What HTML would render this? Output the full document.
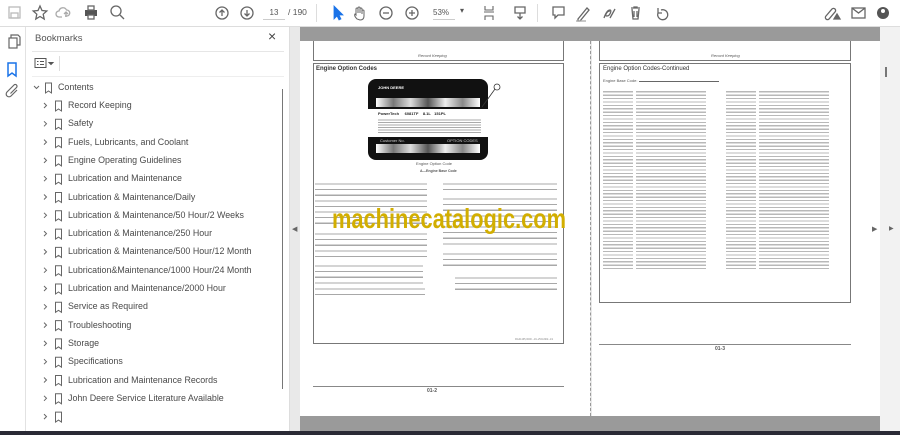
<!DOCTYPE html>
<html><head><meta charset="utf-8"><style>
*{margin:0;padding:0;box-sizing:border-box}
body{width:900px;height:435px;overflow:hidden;background:#fff;font-family:"Liberation Sans",sans-serif;position:relative}
.tb{position:absolute;left:0;top:0;width:900px;height:27px;background:#fff;border-bottom:1px solid #ddd}
.rail{position:absolute;left:0;top:27px;width:26px;height:404px;background:#fff;border-right:1px solid #e2e2e2}
.panel{position:absolute;left:26px;top:27px;width:264px;height:404px;background:#fff;border-right:1px solid #ddd}
.bm{position:absolute;left:68px;font-size:8.9px;color:#4a4a4a;white-space:nowrap}
.doc{position:absolute;left:290px;top:27px;width:590px;height:404px;background:#e9e9e9}
.page{position:absolute;background:#fff}
.t{position:absolute;font-size:4px;color:#555;white-space:nowrap;line-height:5.6px}
.ln{position:absolute;background:repeating-linear-gradient(#fff 0,#fff 2.5px,#a8a8a8 2.5px,#a8a8a8 3.6px,#fff 3.6px,#fff 5.6px)}
.ln2{position:absolute;background:repeating-linear-gradient(#fff 0,#fff 2.2px,#b8b8b8 2.2px,#b8b8b8 3.4px)}
.bottom{position:absolute;left:0;top:431px;width:900px;height:4px;background:#2a2a35}
.sb{position:absolute;left:880px;top:27px;width:20px;height:404px;background:#f2f2f2}
</style></head><body>
<div class="tb">
<svg width="900" height="27" style="position:absolute;left:0;top:0" fill="none" stroke="#666" stroke-width="1.3">
<rect x="9" y="7" width="11" height="11" stroke="#bbb"/><rect x="11" y="13" width="7" height="5" stroke="#bbb"/>
<path d="M40 6l2 4.5 4.8.5-3.6 3.2 1 4.8-4.2-2.5-4.2 2.5 1-4.8-3.6-3.2 4.8-.5z"/>
<path d="M62 17h-3a3 3 0 010-6 4 4 0 017.5-1 3 3 0 01.5 6h-2M66 17v-5m-2 2l2-2 2 2" stroke="#aaa"/>
<rect x="85" y="10" width="12" height="6" fill="#555" stroke="none"/><rect x="88" y="6" width="6" height="4"/><rect x="88" y="15" width="6" height="4" fill="#fff"/>
<circle cx="116" cy="11" r="5"/><path d="M120 15l4 4"/>
<circle cx="222" cy="13" r="6"/><path d="M222 16v-6m-2.5 2.5l2.5-2.5 2.5 2.5"/>
<circle cx="247" cy="13" r="6"/><path d="M247 10v6m-2.5-2.5l2.5 2.5 2.5-2.5"/>
<path d="M334 6v13l3-3 2 4 2-1-2-4h4z" fill="#1a73e8" stroke="#1a73e8" stroke-width=".8"/>
<path d="M357 19c-2-2-3-4-2-5l1 1v-6a1 1 0 012 0v4-5a1 1 0 012 0v5-4a1 1 0 012 0v5-3a1 1 0 012 0v5c0 3-2 4-4 4z" stroke-width="1"/>
<circle cx="386" cy="13" r="6"/><path d="M383 13h6"/>
<circle cx="412" cy="13" r="6"/><path d="M409 13h6M412 10v6"/>
<path d="M485 6v4h8V6M484 12h10M485 20v-4h8v4" stroke-width="1.1"/>
<path d="M515 7h10v6h-10zM520 13v6m-2.5-2.5l2.5 2.5 2.5-2.5"/>
<path d="M553 7h11v8h-6l-3 3v-3h-2z"/>
<path d="M578 19l9-11 2 2-9 11h-2z"/><path d="M576 21h10" stroke="#aaa"/>
<path d="M604 18c2-6 4-8 6-8s0 6-3 6 0-5 3-5M610 18l5-9" />
<path d="M631 8h9M634 8v-1h3v1M632 9l1 10h5l1-10M634 11v6M637 11v6"/>
<path d="M661 10a5 5 0 11-3 3M658 8v5h4" />
<path d="M826 16l6-7a2 2 0 013 3l-6 7a2 2 0 01-3-3" /><path d="M834 19l3-5 3 5z" fill="#666"/>
<rect x="852" y="8" width="13" height="10"/><path d="M852 8l6.5 5 6.5-5"/>
<circle cx="883" cy="13" r="6" fill="#555" stroke="none"/><circle cx="883" cy="11" r="2" fill="#fff" stroke="none"/>
</svg>
<div style="position:absolute;left:263px;top:6px;width:22px;height:14px;border-bottom:1px solid #ccc;font-size:8px;color:#555;text-align:center;line-height:14px">13</div>
<div style="position:absolute;left:288px;top:7px;font-size:8.5px;color:#555">/ 190</div>
<div style="position:absolute;left:316px;top:4px;width:1px;height:18px;background:#ddd"></div>
<div style="position:absolute;left:433px;top:6px;width:22px;height:14px;border-bottom:1px solid #ccc;font-size:8px;color:#555;line-height:14px">53%</div>
<div style="position:absolute;left:460px;top:6px;font-size:8px;color:#555">▾</div>
<div style="position:absolute;left:537px;top:4px;width:1px;height:18px;background:#ddd"></div>
</div>
<div class="rail">
<svg width="26" height="100" fill="none" stroke="#666" stroke-width="1.2">
<rect x="9" y="11" width="8" height="10"/><path d="M11 11V8h7l2 2v8h-3"/>
<path d="M8 36v13l4-3 4 3V36z" stroke="#1a73e8" stroke-width="1.5"/>
<path d="M17 63l-6 6a2.5 2.5 0 01-4-4l7-7a1.7 1.7 0 012.5 2.5l-6 6"/>
</svg></div>
<div class="panel">
<div style="position:absolute;left:9px;top:6px;font-size:9.5px;color:#555">Bookmarks</div>
<div style="position:absolute;left:242px;top:1px;font-size:14px;color:#444">×</div>
<div style="position:absolute;left:6px;top:24px;width:252px;height:1px;background:#e6e6e6"></div>
<svg style="position:absolute;left:8px;top:30px" width="30" height="14" fill="none" stroke="#555" stroke-width="1"><rect x="1" y="1.5" width="11" height="9"/><path d="M3 4.5h1.5M6 4.5h4M3 7.5h1.5M6 7.5h4"/><path d="M15 5.5l2 2 2-2z" fill="#555"/></svg>
<div style="position:absolute;left:33px;top:29px;width:1px;height:15px;background:#ddd"></div>
<div style="position:absolute;left:6px;top:49px;width:252px;height:1px;background:#eee"></div>
<div style="position:absolute;left:256px;top:62px;width:1px;height:300px;background:#777"></div>
</div>
<svg style="position:absolute;left:0;top:0" width="290" height="431" fill="none" stroke="#666" stroke-width="1">
<path d="M34 86l2.5 2.5 2.5-2.5"/><path d="M45.5 83v10l3-2 3 2V83z"/>
<g id="r"><path d="M44 103l2.5 2.5-2.5 2.5"/><path d="M55.5 101v10l3-2 3 2v-10z"/></g>
<use href="#r" y="18.3"/><use href="#r" y="36.6"/><use href="#r" y="54.9"/><use href="#r" y="73.2"/><use href="#r" y="91.5"/><use href="#r" y="109.8"/><use href="#r" y="128.1"/><use href="#r" y="146.4"/><use href="#r" y="164.7"/><use href="#r" y="183"/><use href="#r" y="201.3"/><use href="#r" y="219.6"/><use href="#r" y="237.9"/><use href="#r" y="256.2"/><use href="#r" y="274.5"/><use href="#r" y="292.8"/><use href="#r" y="311.1"/>
</svg>
<div class="bm" style="left:58px;top:82px">Contents</div>
<div class="bm" style="top:100px">Record Keeping</div>
<div class="bm" style="top:118.3px">Safety</div>
<div class="bm" style="top:136.6px">Fuels, Lubricants, and Coolant</div>
<div class="bm" style="top:154.9px">Engine Operating Guidelines</div>
<div class="bm" style="top:173.2px">Lubrication and Maintenance</div>
<div class="bm" style="top:191.5px">Lubrication &amp; Maintenance/Daily</div>
<div class="bm" style="top:209.8px">Lubrication &amp; Maintenance/50 Hour/2 Weeks</div>
<div class="bm" style="top:228.1px">Lubrication &amp; Maintenance/250 Hour</div>
<div class="bm" style="top:246.4px">Lubrication &amp; Maintenance/500 Hour/12 Month</div>
<div class="bm" style="top:264.7px">Lubrication&amp;Maintenance/1000 Hour/24 Month</div>
<div class="bm" style="top:283px">Lubrication and Maintenance/2000 Hour</div>
<div class="bm" style="top:301.3px">Service as Required</div>
<div class="bm" style="top:319.6px">Troubleshooting</div>
<div class="bm" style="top:337.9px">Storage</div>
<div class="bm" style="top:356.2px">Specifications</div>
<div class="bm" style="top:374.5px">Lubrication and Maintenance Records</div>
<div class="bm" style="top:392.8px">John Deere Service Literature Available</div>

<div class="doc">
<div style="position:absolute;left:10px;top:0;width:580px;height:14px;background:#9a9a9a"></div>
<div style="position:absolute;left:10px;top:389px;width:580px;height:15px;background:#9a9a9a"></div>
<div style="position:absolute;left:2px;top:198px;font-size:7px;color:#666">◀</div>
<div class="page" style="left:10px;top:14px;width:290px;height:375px">
 <div style="position:absolute;left:13px;top:0;width:251px;height:20px;border:1px solid #777;border-top:none"></div>
 <div class="t" style="left:118px;top:12px;font-style:italic">Record Keeping</div>
 <div style="position:absolute;left:13px;top:22px;width:251px;height:281px;border:1px solid #777"></div>
 <div class="t" style="left:16px;top:26px;font-size:6px;font-weight:bold;color:#333">Engine Option Codes</div>
 <div style="position:absolute;left:68px;top:38px;width:120px;height:81px;background:#111;border-radius:8px"></div>
 <div style="position:absolute;left:76px;top:57px;width:104px;height:9px;background:linear-gradient(90deg,#fff,#777,#ddd,#555,#eee,#888,#fff)"></div>
 <div style="position:absolute;left:68px;top:68px;width:120px;height:28px;background:#fff"></div>
 <div style="position:absolute;left:76px;top:103px;width:104px;height:9px;background:linear-gradient(90deg,#fff,#777,#ddd,#555,#eee,#888,#fff)"></div>
 <div class="t" style="left:78px;top:44px;color:#fff;font-weight:bold">JOHN DEERE</div>
 <div class="t" style="left:80px;top:97px;color:#ccc">Customer No.</div>
 <div class="t" style="left:147px;top:97px;color:#ccc">OPTION CODES</div>
 <div class="t" style="left:78px;top:70px;color:#222;font-weight:bold">PowerTech &nbsp; &nbsp; 6081TF&nbsp; &nbsp; 8.1L&nbsp;&nbsp; 151PL</div>
 <div style="position:absolute;left:78px;top:77px;width:103px;height:15px;background:repeating-linear-gradient(#fff 0,#fff 1.4px,#aaa 1.4px,#aaa 2.5px)"></div>
 <svg style="position:absolute;left:180px;top:40px" width="30" height="30" fill="none" stroke="#333" stroke-width=".8"><circle cx="17" cy="6" r="3"/><path d="M15 8L2 26"/></svg>
 <div class="t" style="left:116px;top:120px">Engine Option Code</div>
 <div class="t" style="left:120px;top:128px;font-weight:bold;font-size:3.5px">A—Engine Base Code</div>
 <div class="ln" style="left:15px;top:140px;width:112px;height:45px"></div>
 <div class="ln" style="left:15px;top:190px;width:112px;height:28px"></div>
 <div class="ln" style="left:15px;top:222px;width:108px;height:22px"></div>
 <div class="ln" style="left:15px;top:245px;width:110px;height:12px"></div>
 <div class="ln" style="left:143px;top:140px;width:114px;height:11px"></div>
 <div class="ln" style="left:143px;top:155px;width:114px;height:51px"></div>
 <div class="ln" style="left:143px;top:210px;width:114px;height:17px"></div>
 <div class="ln" style="left:155px;top:234px;width:102px;height:17px"></div>
 <div class="t" style="left:215px;top:296px;font-size:2.5px;color:#888">RG41165,0000 –19–25JAN02–1/1</div>
 <div style="position:absolute;left:13px;top:345px;width:251px;height:1px;background:#888"></div>
 <div class="t" style="left:127px;top:348px;font-size:5px;font-weight:bold">01-2</div>
</div>
<div style="position:absolute;left:300px;top:14px;width:1px;height:375px;border-left:1px dashed #999"></div>
<div class="page" style="left:302px;top:14px;width:288px;height:375px">
 <div style="position:absolute;left:7px;top:0;width:252px;height:20px;border:1px solid #777;border-top:none"></div>
 <div class="t" style="left:119px;top:12px;font-style:italic">Record Keeping</div>
 <div style="position:absolute;left:7px;top:22px;width:252px;height:240px;border:1px solid #777"></div>
 <div class="t" style="left:11px;top:26px;font-size:6px;color:#333">Engine Option Codes-Continued</div>
 <div class="t" style="left:11px;top:37px">Engine Base Code: <span style="display:inline-block;width:80px;border-bottom:1px solid #666"></span></div>
 <div class="ln2" style="left:11px;top:48px;width:30px;height:181px"></div>
 <div class="ln2" style="left:44px;top:48px;width:70px;height:181px"></div>
 <div class="ln2" style="left:134px;top:48px;width:30px;height:181px"></div>
 <div class="ln2" style="left:167px;top:48px;width:70px;height:181px"></div>
 <div style="position:absolute;left:7px;top:303px;width:252px;height:1px;background:#888"></div>
 <div class="t" style="left:123px;top:306px;font-size:5px;font-weight:bold">01-3</div>
</div>
<div style="position:absolute;left:582px;top:198px;font-size:7px;color:#666">▶</div>
</div>
<svg style="position:absolute;left:330px;top:198px" width="240" height="40"><text x="2" y="30" font-family="Liberation Sans" font-weight="bold" font-size="28" fill="#d2ae00" textLength="234" lengthAdjust="spacingAndGlyphs">machinecatalogic.com</text></svg>
<div class="sb"><div style="position:absolute;left:5px;top:40px;width:2px;height:10px;background:#777"></div><div style="position:absolute;left:9px;top:198px;font-size:6px;color:#666">▶</div></div>
<div class="bottom"></div>
</body></html>
